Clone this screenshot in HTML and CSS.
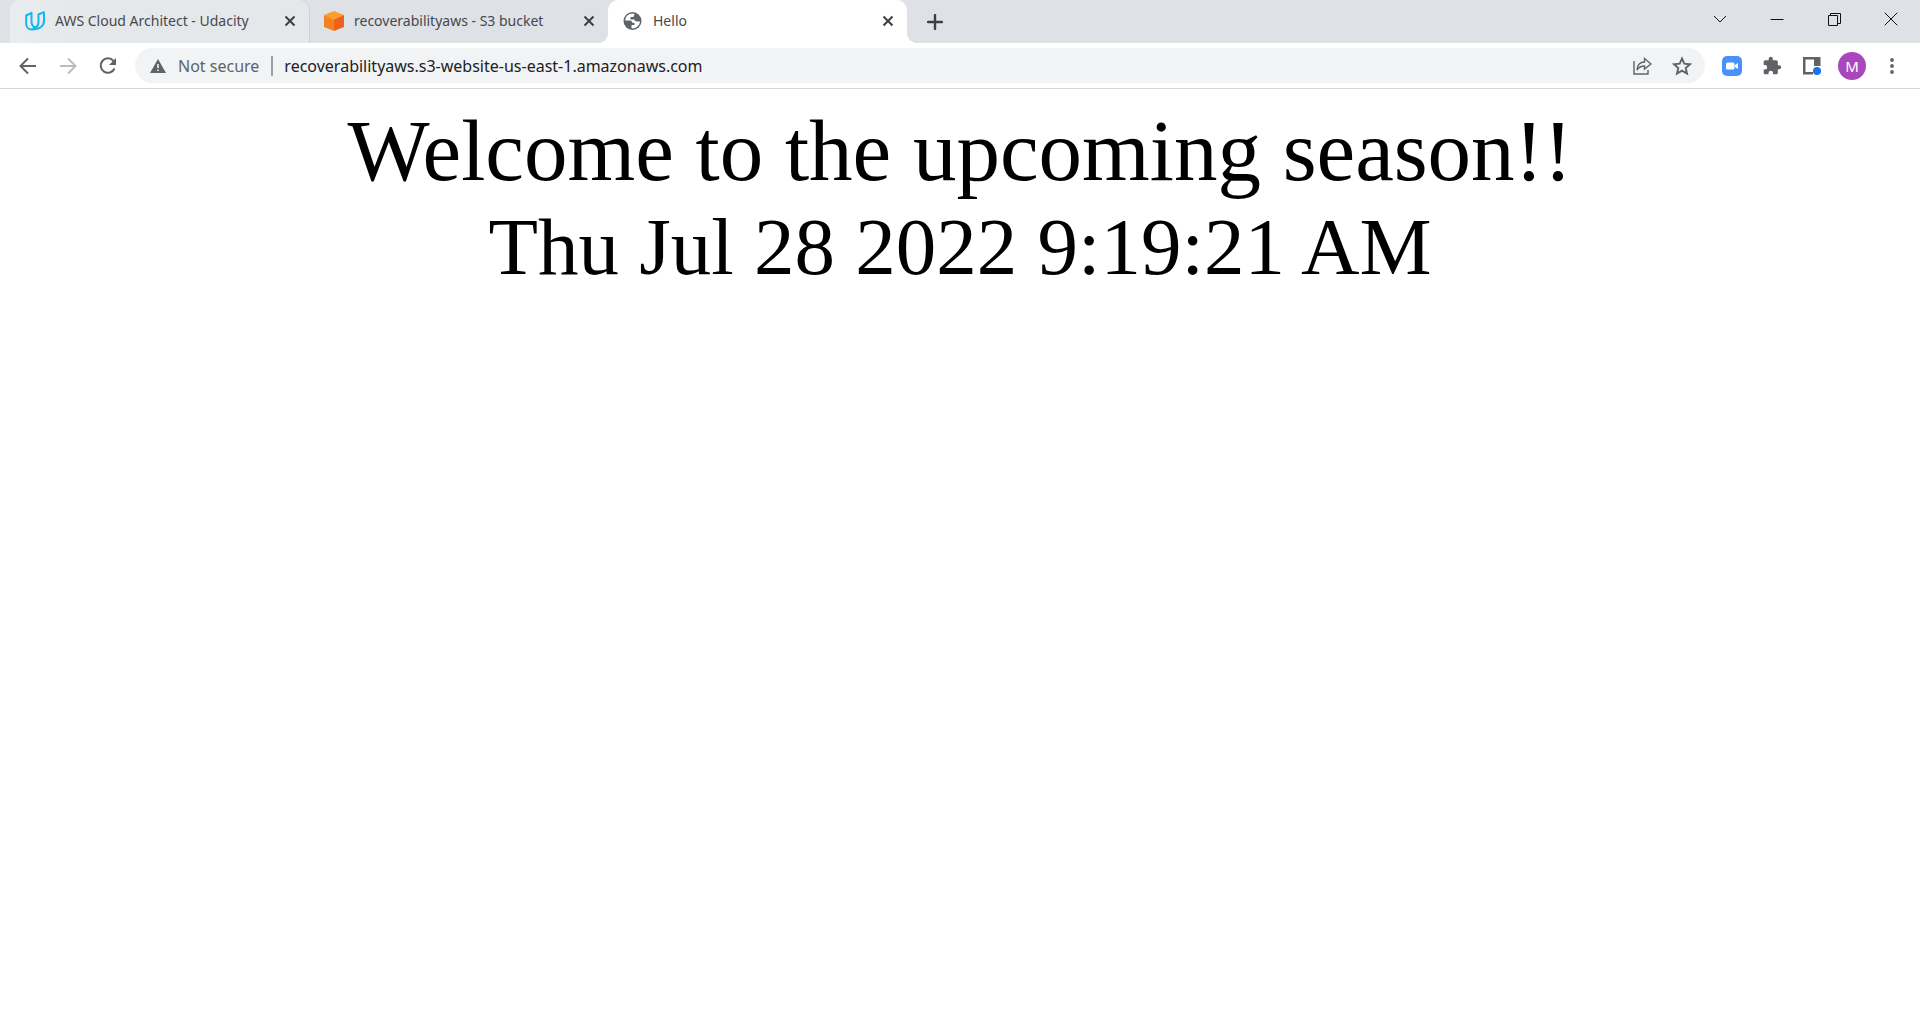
FILE: index.html
```html
<!DOCTYPE html>
<html lang="en">
<head>
<meta charset="utf-8">
<title>Hello</title>
<link rel="stylesheet" href="styles.css">
</head>
<body>
<header class="browser">
  <div class="tabstrip">
    <div class="tabs">
      <div class="tab tab-hover">
        <svg class="favicon" viewBox="0 0 20 20" fill="none" stroke="#12b8ea" stroke-width="2" stroke-linejoin="round" stroke-linecap="round"><path d="M6.500 1.800 1.200 4.500V12.500C1.200 16 3.500 18.500 7 18.500L11 16.500C8 16 6.500 13.500 6.500 10.500ZM19 1.200 13.500 3.500V11C13.500 13.500 12.500 15.500 10.500 16.500M19 1.200V10C19 14.500 15 18.500 7 18.500"/></svg>
        <span class="tab-title">AWS Cloud Architect - Udacity</span>
        <button class="tab-close" aria-label="Close tab"><svg viewBox="0 0 12 12" width="12" height="12"><path d="M1.500 1.500 10.500 10.500M10.500 1.500 1.500 10.500" stroke="#3c4043" stroke-width="2"/></svg></button>
      </div>
      <div class="tab">
        <svg class="favicon" viewBox="0 0 20 20"><path d="M10 0 20 4 10 8.500 0 4Z" fill="#ff9d2b"/><path d="M0 4 10 8.500V20L0 16Z" fill="#f58220"/><path d="M20 4 10 8.500V20L20 16Z" fill="#f0611e"/></svg>
        <span class="tab-title">recoverabilityaws - S3 bucket</span>
        <button class="tab-close" aria-label="Close tab"><svg viewBox="0 0 12 12" width="12" height="12"><path d="M1.500 1.500 10.500 10.500M10.500 1.500 1.500 10.500" stroke="#3c4043" stroke-width="2"/></svg></button>
      </div>
      <div class="tab tab-active">
        <svg class="favicon" viewBox="0 0 20 20"><circle cx="9.500" cy="10" r="9" fill="#5f6368"/><path d="M9.500 2.500C5.500 2.500 2.300 5.500 2.200 9.500H6.500C8.500 9.500 9.500 10.500 9.500 12H11.500V14H8.500V17.300C13 18 16.800 14.500 17 10.500H14C12.500 10.500 11.500 9.800 11.500 8.500H7.500V6H10C11 6 11 4.500 11.500 3Z" fill="#fff"/></svg>
        <span class="tab-title">Hello</span>
        <button class="tab-close" aria-label="Close tab"><svg viewBox="0 0 12 12" width="12" height="12"><path d="M1.500 1.500 10.500 10.500M10.500 1.500 1.500 10.500" stroke="#3c4043" stroke-width="2"/></svg></button>
      </div>
    </div>
    <button class="new-tab" aria-label="New tab"><svg viewBox="0 0 16 16" width="16" height="16"><path d="M8 1V15M1 8H15" stroke="#3c4043" stroke-width="2.400" stroke-linecap="round"/></svg></button>
    <div class="window-controls">
      <button aria-label="Search tabs"><svg viewBox="0 0 14 14" width="14" height="14"><path d="M1 4 7 10 13 4"/></svg></button>
      <button aria-label="Minimize"><svg viewBox="0 0 14 14" width="14" height="14"><path d="M.5 7.500H13.500"/></svg></button>
      <button aria-label="Restore"><svg viewBox="0 0 14 14" width="14" height="14"><path d="M1.500 3.500H10.500V13.500H1.500ZM3.500 3V1.500H13.500V11.500H11"/></svg></button>
      <button aria-label="Close"><svg viewBox="0 0 14 14" width="14" height="14"><path d="M.7.7 13.300 13.300M13.300.7.700 13.300"/></svg></button>
    </div>
  </div>
  <div class="toolbar">
    <nav class="nav-buttons">
      <button aria-label="Back"><svg viewBox="0 0 20 20"><path d="M18 10H3M10 2.500 2.500 10 10 17.500" fill="none" stroke="#5f6368" stroke-width="2"/></svg></button>
      <button aria-label="Forward" disabled><svg viewBox="0 0 20 20"><path d="M2 10H17M10 2.500 17.500 10 10 17.500" fill="none" stroke="#babcbe" stroke-width="2"/></svg></button>
      <button aria-label="Reload"><svg viewBox="0 0 20 20"><path d="M15.500 5A7.200 7.200 0 1 0 16.500 12.500" fill="none" stroke="#5f6368" stroke-width="2"/><path d="M18 2V9H11Z" fill="#5f6368"/></svg></button>
    </nav>
    <form class="omnibox">
      <svg class="warning" viewBox="0 0 16 16"><path d="M8 1 16 15H0Z" fill="#5f6368"/><path d="M8 6V10M8 11.500V13" stroke="#f1f3f4" stroke-width="1.600"/></svg>
      <label class="security" for="address">Not secure</label>
      <input id="address" class="address" type="text" value="recoverabilityaws.s3-website-us-east-1.amazonaws.com" spellcheck="false">
      <button type="button" aria-label="Share"><svg viewBox="0 0 20 20" fill="none" stroke="#5f6368" stroke-width="1.400"><path d="M2 5V18H16V14M5 14C5.500 8.500 8 6 12.500 6V2.500L19 8 12.500 13V10C9 10 7 11 5 14Z"/></svg></button>
      <button type="button" aria-label="Bookmark this tab"><svg viewBox="0 0 20 20"><path d="M10 2.500 12.300 7.700 18 8.200 13.700 12 15 17.600 10 14.600 5 17.600 6.300 12 2 8.200 7.700 7.700Z" fill="none" stroke="#5f6368" stroke-width="1.900"/></svg></button>
    </form>
    <div class="actions">
      <button aria-label="Zoom"><svg viewBox="0 0 20 20"><rect width="20" height="20" rx="5" fill="#4a90fb"/><rect x="4" y="6.500" width="8.500" height="7" rx="1.500" fill="#fff"/><path d="M13 9 16 7V13L13 11Z" fill="#fff"/></svg></button>
      <button aria-label="Extensions"><svg viewBox="0 0 24 24"><path fill="#5f6368" d="M20.500 11H19V7c0-1.100-.9-2-2-2h-4V3.500a2.500 2.500 0 0 0-5 0V5H4c-1.100 0-2 .9-2 2v3.800h1.500a2.700 2.700 0 0 1 0 5.400H2V20c0 1.100.9 2 2 2h3.800v-1.500a2.700 2.700 0 0 1 5.400 0V22H17c1.100 0 2-.9 2-2v-4h1.500a2.500 2.500 0 0 0 0-5z"/></svg></button>
      <button aria-label="Side panel"><svg viewBox="0 0 20 20"><path d="M1 1H18.500V10H12V3.500H3.500V16H11V18.500H1Z" fill="#5f6368"/><circle cx="15" cy="15" r="4" fill="#1a73e8"/></svg></button>
      <button class="avatar" aria-label="Profile">M</button>
      <button aria-label="Menu"><svg viewBox="0 0 20 20" fill="#5f6368"><circle cx="10" cy="4" r="1.900"/><circle cx="10" cy="10" r="1.900"/><circle cx="10" cy="16" r="1.900"/></svg></button>
    </div>
  </div>
</header>
<main class="page">
  <div class="welcome">Welcome to the upcoming season!!</div>
  <div class="clock">Thu Jul 28 2022 9:19:21 AM</div>
</main>
</body>
</html>
```
FILE: styles.css
```css
* { box-sizing: border-box; }
body { margin: 0; background: #fff; font-family: "Noto Sans", "Open Sans", sans-serif; }
button { border: 0; padding: 0; margin: 0; background: none; font: inherit; display: flex; align-items: center; justify-content: center; flex: none; }

.tabstrip { display: flex; height: 43px; background: #dee1e6; padding-left: 10px; }
.tabs { display: flex; flex: 0 1 897px; min-width: 0; }
.tab { flex: 1 1 0; min-width: 0; display: flex; align-items: center; gap: 10px; padding: 0 10px 2px 15px; border-radius: 10px 10px 0 0; }
.tab-hover { background: linear-gradient(90deg, #eaedf0, #e5e8eb 25%); box-shadow: 1px 0 #cdd0d5; }
.tab-active { position: relative; background: #fff; }
.tab-active::before, .tab-active::after { content: ""; position: absolute; bottom: 0; width: 10px; height: 10px; }
.tab-active::before { left: -10px; background: radial-gradient(circle at 0 0, #dee1e6 10px, #fff 10px); }
.tab-active::after { right: -10px; background: radial-gradient(circle at 100% 0, #dee1e6 10px, #fff 10px); }
.favicon { width: 20px; height: 20px; flex: none; }
.tab-title { flex: 1; min-width: 0; overflow: hidden; white-space: nowrap; font-size: 14px; line-height: 20px; color: #45494d; }
.tab-close { width: 18px; height: 18px; }
.new-tab { width: 36px; margin-left: 10px; }
.window-controls { display: flex; margin-left: auto; height: 37px; padding-right: 1px; }
.window-controls button { width: 57px; }
.window-controls path { fill: none; stroke: #111; stroke-width: 1; }

.toolbar { display: flex; align-items: center; height: 46px; border-bottom: 1px solid #d5d7da; padding: 0 10px; }
.toolbar button svg { width: 20px; height: 20px; }
.nav-buttons { display: flex; gap: 4px; margin-right: 9px; }
.nav-buttons button { width: 36px; height: 36px; }
.omnibox { flex: 1; min-width: 0; display: flex; align-items: center; height: 35px; padding: 0 5px 0 15px; border-radius: 18px; background: #f1f3f4; font-size: 16px; line-height: 22px; }
.omnibox button { width: 36px; height: 35px; margin-left: 4px; }
.warning { width: 16px; height: 16px; margin-right: 12px; flex: none; }
.security { color: #5f6368; white-space: nowrap; padding-right: 12px; border-right: 2px solid #9aa0a6; line-height: 20px; }
.address { flex: 1; min-width: 0; border: 0; padding: 0 0 0 11px; background: none; outline: 0; font: inherit; color: #202124; }
.actions { display: flex; align-items: center; gap: 4px; margin-left: 9px; }
.actions button { width: 36px; height: 36px; }
.actions .avatar { width: 28px; height: 28px; margin: 0 4px; border-radius: 50%; background: #ab47bc; color: #fff; font-size: 15px; }

.page { padding: 12px 8px; text-align: center; font-family: "Liberation Serif", "Times New Roman", serif; color: #000; }
.welcome { font-size: 87px; line-height: 100px; }
.clock { font-size: 81px; line-height: 92px; }
```
